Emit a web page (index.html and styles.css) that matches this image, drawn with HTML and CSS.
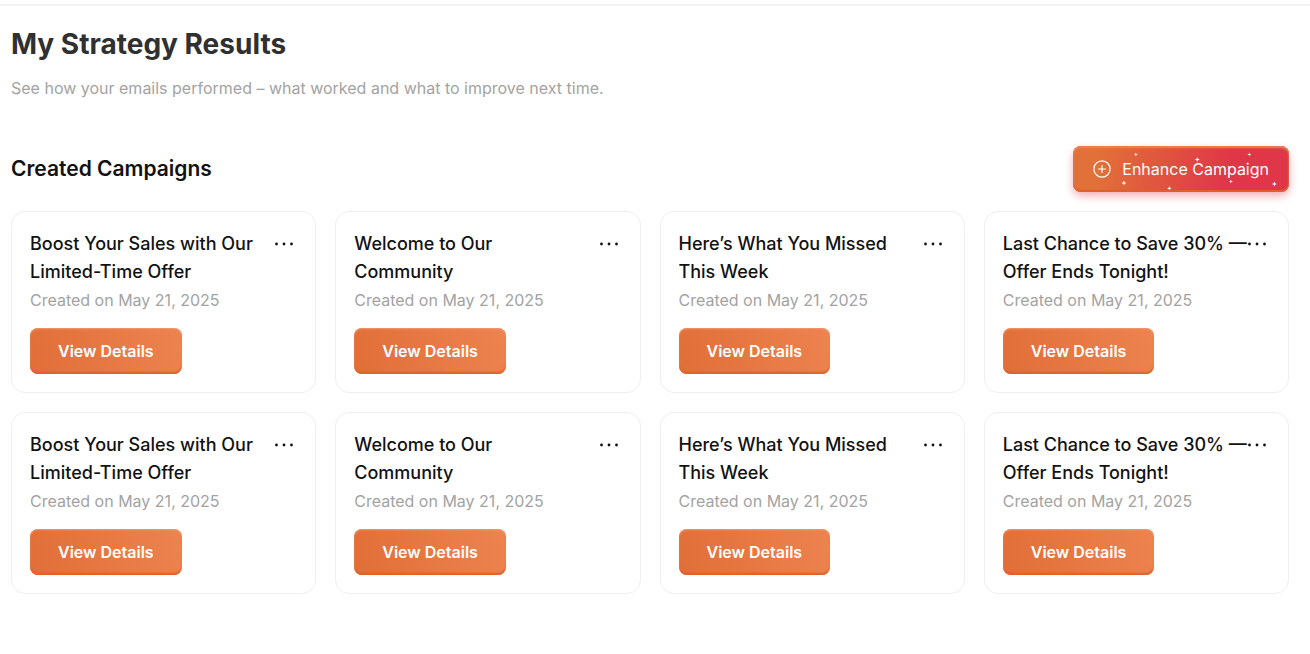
FILE: index.html
```html
<!DOCTYPE html>
<html lang="en">
<head>
<meta charset="utf-8">
<meta name="viewport" content="width=device-width, initial-scale=1">
<title>My Strategy Results</title>
<link rel="stylesheet" href="styles.css">
</head>
<body>
<svg class="sprite" aria-hidden="true">
  <symbol id="dots" viewBox="0 0 20 20"><circle cx="2.5" cy="10" r="1.4"/><circle cx="10" cy="10" r="1.4"/><circle cx="17.5" cy="10" r="1.4"/></symbol>
</svg>
<main class="page">
  <header class="intro">
    <h1 class="page-title">My Strategy Results</h1>
    <p class="subtitle">See how your emails performed – what worked and what to improve next time.</p>
  </header>
  <section class="campaigns">
    <div class="toolbar">
      <h2 class="section-title">Created Campaigns</h2>
      <button class="enhance" type="button">
        <svg class="sparkles" viewBox="0 0 215 46" fill="#fff" aria-hidden="true">
          <path d="M62.500 6.500l.5 1.500 1.500.5-1.500.5-.5 1.500-.5-1.500-1.500-.5 1.500-.5z"/>
          <path d="M124 11l.7 1.800 1.800.7-1.800.7-.7 1.800-.7-1.800-1.800-.7 1.800-.7z"/>
          <path d="M176 6.500l.5 1.500 1.500.5-1.500.5-.5 1.500-.5-1.500-1.500-.5 1.500-.5z"/>
          <path d="M50.500 34.500l.7 1.800 1.800.7-1.800.7-.7 1.800-.7-1.800-1.800-.7 1.800-.7z"/>
          <path d="M96 40l.6 1.700 1.700.6-1.700.6-.6 1.700-.6-1.700-1.700-.6 1.700-.6z"/>
          <path d="M157.500 33.500l.5 1.500 1.500.5-1.500.5-.5 1.500-.5-1.500-1.500-.5 1.500-.5z"/>
          <path d="M201 35.500l.7 1.800 1.800.7-1.800.7-.7 1.800-.7-1.800-1.800-.7 1.800-.7z"/>
        </svg>
        <svg class="plus" viewBox="0 0 18 18" fill="none" stroke="#fff" stroke-width="1.200" stroke-linecap="round" aria-hidden="true"><circle cx="9" cy="9" r="8.100"/><path d="M9 5.500v7M5.500 9h7"/></svg>
        <span class="enhance-label">Enhance Campaign</span>
      </button>
    </div>
    <div class="grid">
      <article class="card">
        <div class="card-head"><h3 class="card-title">Boost Your Sales with Our Limited-Time Offer</h3><button class="more" type="button" aria-label="More options"><svg class="more-icon"><use href="#dots"/></svg></button></div>
        <p class="date">Created on May 21, 2025</p>
        <button class="details" type="button">View Details</button>
      </article>
      <article class="card">
        <div class="card-head"><h3 class="card-title">Welcome to Our <br>Community</h3><button class="more" type="button" aria-label="More options"><svg class="more-icon"><use href="#dots"/></svg></button></div>
        <p class="date">Created on May 21, 2025</p>
        <button class="details" type="button">View Details</button>
      </article>
      <article class="card">
        <div class="card-head"><h3 class="card-title">Here’s What You Missed This Week</h3><button class="more" type="button" aria-label="More options"><svg class="more-icon"><use href="#dots"/></svg></button></div>
        <p class="date">Created on May 21, 2025</p>
        <button class="details" type="button">View Details</button>
      </article>
      <article class="card">
        <div class="card-head"><h3 class="card-title">Last Chance to Save 30% — Offer Ends Tonight!</h3><button class="more" type="button" aria-label="More options"><svg class="more-icon"><use href="#dots"/></svg></button></div>
        <p class="date">Created on May 21, 2025</p>
        <button class="details" type="button">View Details</button>
      </article>
      <article class="card">
        <div class="card-head"><h3 class="card-title">Boost Your Sales with Our Limited-Time Offer</h3><button class="more" type="button" aria-label="More options"><svg class="more-icon"><use href="#dots"/></svg></button></div>
        <p class="date">Created on May 21, 2025</p>
        <button class="details" type="button">View Details</button>
      </article>
      <article class="card">
        <div class="card-head"><h3 class="card-title">Welcome to Our <br>Community</h3><button class="more" type="button" aria-label="More options"><svg class="more-icon"><use href="#dots"/></svg></button></div>
        <p class="date">Created on May 21, 2025</p>
        <button class="details" type="button">View Details</button>
      </article>
      <article class="card">
        <div class="card-head"><h3 class="card-title">Here’s What You Missed This Week</h3><button class="more" type="button" aria-label="More options"><svg class="more-icon"><use href="#dots"/></svg></button></div>
        <p class="date">Created on May 21, 2025</p>
        <button class="details" type="button">View Details</button>
      </article>
      <article class="card">
        <div class="card-head"><h3 class="card-title">Last Chance to Save 30% — Offer Ends Tonight!</h3><button class="more" type="button" aria-label="More options"><svg class="more-icon"><use href="#dots"/></svg></button></div>
        <p class="date">Created on May 21, 2025</p>
        <button class="details" type="button">View Details</button>
      </article>
    </div>
  </section>
</main>
</body>
</html>
```
FILE: styles.css
```css
* { box-sizing: border-box; }

body {
  margin: 0;
  padding-top: 4px;
  background: #fff;
  color: #121212;
  font-family: Inter, "Liberation Sans", sans-serif;
}

h1, h2, h3, p { margin: 0; }

button {
  border: 0;
  font-family: inherit;
  cursor: pointer;
}

.sprite { display: none; }

.page {
  padding: 18px 21px 32px 11px;
  border-top: 2px solid #f3f3f3;
}

.page-title {
  color: #303030;
  font-size: 28px;
  font-weight: 700;
  line-height: 40px;
}

.subtitle {
  margin-top: 12px;
  color: #a3a3a3;
  font-size: 16px;
  line-height: 24px;
}

.campaigns { margin-top: 46px; }

.toolbar {
  display: flex;
  align-items: center;
  justify-content: space-between;
}

.section-title {
  font-size: 21px;
  font-weight: 600;
  line-height: 28px;
}

.enhance {
  position: relative;
  display: flex;
  align-items: center;
  gap: 11px;
  height: 46px;
  padding: 0 20px;
  border-radius: 8px;
  background: linear-gradient(100deg, #e17138 12%, #df3648 72%);
  box-shadow: inset 0 2px 2px #ed8350, inset 0 -2px 1px #e0602b, inset 0 0 2px #e27542, 0 4px 8px rgba(223, 54, 72, 0.4);
  color: #fff;
  font-size: 16px;
  line-height: 24px;
}

.sparkles {
  position: absolute;
  inset: 0;
  width: 100%;
  height: 100%;
}

.plus {
  width: 18px;
  height: 18px;
}

.grid {
  display: grid;
  grid-template-columns: repeat(4, 1fr);
  gap: 19px;
  margin-top: 19px;
}

.card {
  padding: 18px;
  border: 1px solid #efefef;
  border-radius: 14px;
}

.card-head {
  display: flex;
  align-items: flex-start;
  justify-content: space-between;
}

.card-title {
  font-size: 18px;
  font-weight: 500;
  line-height: 28px;
}

.more {
  display: flex;
  flex: none;
  align-items: center;
  height: 28px;
  margin-right: 3px;
  padding: 0;
  background: none;
  color: #121212;
}

.more-icon {
  width: 20px;
  height: 20px;
  fill: currentColor;
}

.date {
  color: #a3a3a3;
  font-size: 16px;
  line-height: 28px;
}

.details {
  height: 46px;
  margin-top: 14px;
  padding: 0 28px;
  border-radius: 8px;
  background: linear-gradient(75deg, #e16e37, #ed8350);
  box-shadow: inset 0 1px 2px #f19a70, inset 0 -2px 2px #dc6028;
  color: #fff;
  font-size: 16px;
  font-weight: 600;
  line-height: 24px;
}
```
